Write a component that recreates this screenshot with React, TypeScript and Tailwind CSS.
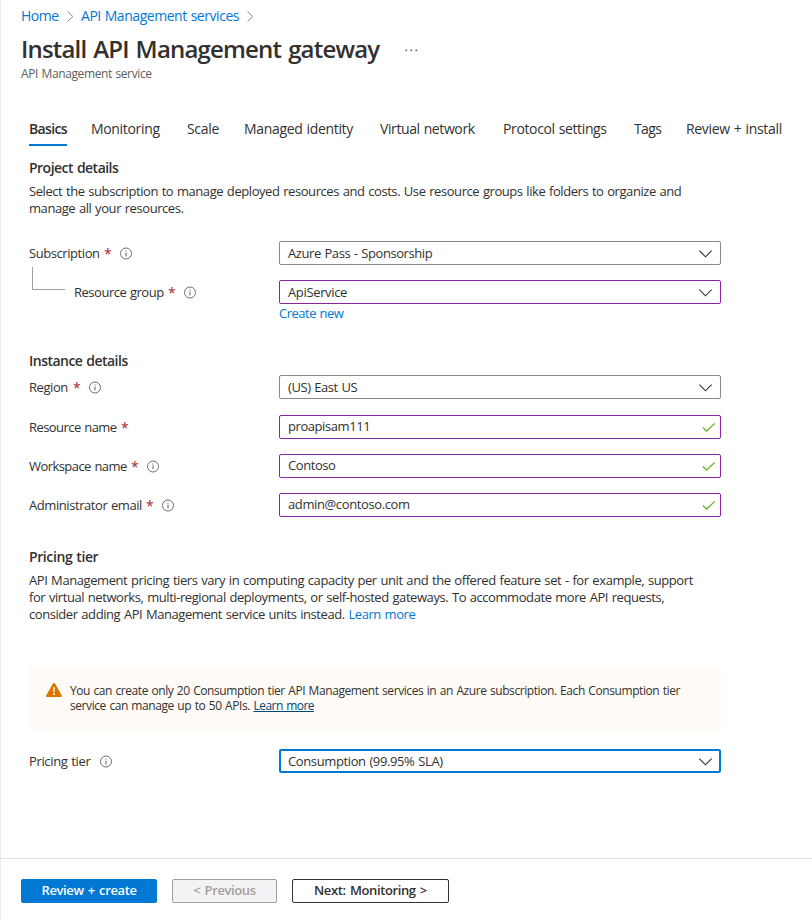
import type { ReactNode } from "react";

function Chevron() {
  return (
    <svg className="mt-px shrink-0" width="13" height="8" viewBox="0 0 13 8" fill="none" stroke="#323130" strokeWidth="1.1">
      <path d="M0.4 0.7 L6.5 6.8 L12.6 0.7" />
    </svg>
  );
}

function Check() {
  return (
    <svg className="shrink-0" width="13" height="9" viewBox="0 0 13 9" fill="none" stroke="#6bb52a" strokeWidth="1.3">
      <path d="M0.8 4.6 L4.6 8 L12.7 0.5" />
    </svg>
  );
}

function Crumb() {
  return (
    <svg className="shrink-0" width="7" height="11" viewBox="0 0 7 11" fill="none" stroke="#8a8886" strokeWidth="1">
      <path d="M0.5 0.5 L5.8 5.5 L0.5 10.5" />
    </svg>
  );
}

function Info() {
  return (
    <svg className="mt-px shrink-0" width="12" height="13" viewBox="0 0 12 13" fill="none">
      <circle cx="6" cy="6.5" r="5.5" stroke="#605e5c" strokeWidth="0.9" />
      <path d="M6 5.6 V9.4" stroke="#605e5c" strokeWidth="1" />
      <path d="M6 3.5 V4.6" stroke="#605e5c" strokeWidth="1" />
    </svg>
  );
}

function Label({ text, width, required, info }: { text: string; width: string; required?: boolean; info?: boolean }) {
  return (
    <div className="flex h-6 items-center">
      <span className={`${width} whitespace-nowrap`}>{text}</span>
      {required && <span className="w-[16px] text-[14px] font-medium text-[#a4262c]">*</span>}
      {info && <Info />}
    </div>
  );
}

function Field({ border, children, icon }: { border: string; children: ReactNode; icon: "chevron" | "check" }) {
  return (
    <div className={`flex h-6 w-[442px] items-center justify-between rounded-[2px] bg-white ${border}`}>
      <span className={icon === "check" ? "pb-[2px] whitespace-nowrap" : "whitespace-nowrap"}>{children}</span>
      {icon === "chevron" ? <Chevron /> : <Check />}
    </div>
  );
}

const gray = "border border-[#8a8886] pl-2 pr-[8px]";
const purple = "border border-[#8a24a5] pl-2 pr-[8px]";
const purpleCheck = "border border-[#8a24a5] pl-2 pr-[5px]";
const blue = "border-2 border-[#0078d4] pl-[7px] pr-[7px] tracking-[-0.38px]";

const tabs = [
  { name: "Basics", box: "w-[62px] tracking-[-0.65px] font-semibold" },
  { name: "Monitoring", box: "w-24" },
  { name: "Scale", box: "w-[57px]" },
  { name: "Managed identity", box: "w-[136px]" },
  { name: "Virtual network", box: "w-[123px] tracking-[-0.4px]" },
  { name: "Protocol settings", box: "w-[131px] tracking-[-0.37px]" },
  { name: "Tags", box: "w-[52px] tracking-[-0.6px]" },
  { name: "Review + install", box: "w-[110px]" },
];

export default function App() {
  return (
    <div className="relative flex h-[920px] w-[812px] flex-col overflow-hidden border-l border-[#ececec] bg-white font-['Open_Sans','Segoe_UI',sans-serif] text-[13px] leading-[17px] tracking-[-0.43px] text-[#323130] [word-spacing:0.75px]">
      <span className="absolute top-[46px] -left-px h-px w-px bg-[#605e5c]" />
      <nav className="flex h-8 items-center pl-5 text-[14px] tracking-[-0.46px] text-[#0078d4]">
        <a className="w-[46px] shrink-0 pb-px">Home</a>
        <Crumb />
        <a className="w-[173px] shrink-0 pb-px pl-[7px] whitespace-nowrap">API Management services</a>
        <Crumb />
      </nav>
      <header className="h-[84px] pl-5">
        <div className="flex h-[34px] items-center">
          <h1 className="w-[384px] whitespace-nowrap text-[24px] leading-[34px] font-semibold tracking-[-0.82px] [word-spacing:1.5px]">Install API Management gateway</h1>
          <svg className="mt-0.5" width="13" height="3" viewBox="0 0 13 3" fill="#605e5c">
            <rect x="0.5" y="0.5" width="1.6" height="1.6" />
            <rect x="5.5" y="0.5" width="1.6" height="1.6" />
            <rect x="10.5" y="0.5" width="1.6" height="1.6" />
          </svg>
        </div>
        <p className="text-[12px] leading-4 tracking-[-0.38px] text-[#605e5c]">API Management service</p>
      </header>
      <div className="flex h-[30px] pl-7 text-[14px] tracking-[-0.33px]">
        {tabs.map((t, i) => (
          <div key={t.name} className={`${t.box} shrink-0`}>
            <span className={i === 0 ? "block h-[30px] w-[38px] border-b-2 border-[#0078d4] pt-1" : "block pt-1 whitespace-nowrap"}>{t.name}</span>
          </div>
        ))}
      </div>
      <main className="h-[712px] w-[741px] shrink-0 pl-7">
        <section className="flex h-[191px] flex-col pt-[13px]">
          <h2 className="h-6 text-[14px] font-semibold tracking-[-0.52px]">Project details</h2>
          <p className="whitespace-nowrap">
            Select the subscription to manage deployed resources and costs. Use resource groups like folders to organize and
            <br />
            manage all your resources.
          </p>
          <div className="mt-6 flex">
            <div className="w-[250px]">
              <Label text="Subscription" width="w-[75px]" required info />
              <div className="mt-[2px] flex">
                <div className="ml-[3px] h-[23px] w-[33px] border-b border-l border-[#a19f9d]" />
                <div className="mt-[13px] ml-[9px]">
                  <Label text="Resource group" width="w-[94px] tracking-[-0.48px]" required info />
                </div>
              </div>
            </div>
            <div>
              <Field border={gray} icon="chevron">Azure Pass - Sponsorship</Field>
              <div className="mt-[15px]" />
              <Field border={purple} icon="chevron"><span className="tracking-[-0.35px]">ApiService</span></Field>
              <a className="mt-px block tracking-[-0.5px] text-[#0078d4]">Create new</a>
            </div>
          </div>
        </section>
        <section className="h-[196px] pt-[15px]">
          <h2 className="h-[23px] text-[14px] font-semibold tracking-[-0.52px]">Instance details</h2>
          <div className="flex">
            <div className="w-[250px]">
              <Label text="Region" width="w-11" required info />
              <div className="mt-4" />
              <Label text="Resource name" width="w-[92px] tracking-[-0.56px]" required />
              <div className="mt-[15px]" />
              <Label text="Workspace name" width="w-[102px] tracking-[-0.56px]" required info />
              <div className="mt-[15px]" />
              <Label text="Administrator email" width="w-[117px]" required info />
            </div>
            <div>
              <Field border={gray} icon="chevron">(US) East US</Field>
              <div className="mt-4" />
              <Field border={purpleCheck} icon="check">proapisam111</Field>
              <div className="mt-[15px]" />
              <Field border={purpleCheck} icon="check">Contoso</Field>
              <div className="mt-[15px]" />
              <Field border={purpleCheck} icon="check"><span className="tracking-[-0.38px]">admin@contoso.com</span></Field>
            </div>
          </div>
        </section>
        <section className="pt-[15px]">
          <h2 className="h-6 text-[14px] font-semibold tracking-[-0.4px]">Pricing tier</h2>
          <p className="whitespace-nowrap">
            <span className="tracking-[-0.42px]">API Management pricing tiers vary in computing capacity per unit and the offered feature set - for example, support</span>
            <br />
            for virtual networks, multi-regional deployments, or self-hosted gateways. To accommodate more API requests,
            <br />
            consider adding API Management service units instead. <a className="text-[#0078d4]">Learn more</a>
          </p>
          <div className="mt-[43px] flex h-16 w-[692px] bg-[#fffbf6] pt-[17px] pl-[17px] text-[12px] leading-[15px] tracking-[-0.42px]">
            <svg className="mr-2 shrink-0" width="16" height="14" viewBox="0 0 16 14">
              <path d="M8 0 Q8.8 0 9.2 0.8 L15.8 12.6 Q16.3 14 15 14 H1 Q-0.3 14 0.2 12.6 L6.8 0.8 Q7.2 0 8 0 Z" fill="#db7500" />
              <path d="M7.1 4.2 H8.9 L8.6 9.2 H7.4 Z M7.1 10.3 H8.9 V12 H7.1 Z" fill="#fff" />
            </svg>
            <p className="whitespace-nowrap">
              You can create only 20 Consumption tier API Management services in an Azure subscription. Each Consumption tier
              <br />
              service can manage up to 50 APIs. <a className="tracking-[-0.52px] text-[#004578] underline">Learn more</a>
            </p>
          </div>
          <div className="mt-[19px] flex">
            <div className="w-[250px]">
              <Label text="Pricing tier" width="w-[71px] tracking-[-0.35px]" info />
            </div>
            <Field border={blue} icon="chevron">Consumption (99.95% SLA)</Field>
          </div>
        </section>
      </main>
      <footer className="flex h-[62px] gap-[15px] border-t border-[#e1dfdd] pt-5 pl-5 font-semibold tracking-[-0.38px]">
        <button className="h-6 w-[136px] rounded-[2px] bg-[#0078d4] pb-[2px] text-white [word-spacing:1.2px]">Review + create</button>
        <button className="h-6 w-[105px] rounded-[2px] border border-[#a19f9d] bg-[#f5f2f5] pb-[2px] text-[#a19f9d] [word-spacing:1.2px]">&lt; Previous</button>
        <button className="h-6 w-[157px] rounded-[2px] border border-[#323130] bg-white pb-[2px] [word-spacing:1.2px]">Next: Monitoring &gt;</button>
      </footer>
    </div>
  );
}
